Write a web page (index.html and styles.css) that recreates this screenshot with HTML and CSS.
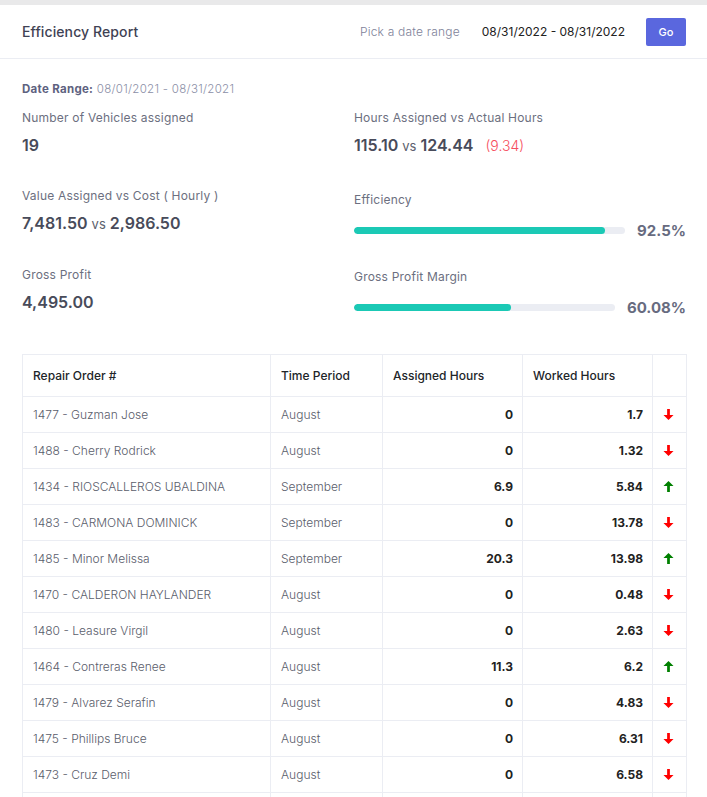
FILE: index.html
```html
<!DOCTYPE html>
<html>
<head>
<meta charset="utf-8">
<link rel="stylesheet" href="styles.css">
</head>
<body>
<div class="card">
  <div class="card-header">
    <div class="title">Efficiency Report</div>
    <div class="filters">
      <span class="pick">Pick a date range</span>
      <span class="range">08/31/2022 - 08/31/2022</span>
      <button class="go">Go</button>
    </div>
  </div>
  <div class="card-body">
    <div class="date-range"><b>Date Range:</b> 08/01/2021 - 08/31/2021</div>
    <div class="stats">
      <div class="col">
        <div class="stat">
          <div class="label">Number of Vehicles assigned</div>
          <div class="value">19</div>
        </div>
        <div class="stat">
          <div class="label">Value Assigned vs Cost ( Hourly )</div>
          <div class="value">7,481.50 <span class="vs">vs</span> 2,986.50</div>
        </div>
        <div class="stat">
          <div class="label">Gross Profit</div>
          <div class="value">4,495.00</div>
        </div>
      </div>
      <div class="col">
        <div class="stat">
          <div class="label">Hours Assigned vs Actual Hours</div>
          <div class="value">115.10 <span class="vs">vs</span> 124.44 <span class="diff">(9.34)</span></div>
        </div>
        <div class="stat progress-stat">
          <div class="label">Efficiency</div>
          <div class="progress-row">
            <div class="track"><div class="fill" style="width:92.5%"></div></div>
            <div class="pct">92.5%</div>
          </div>
        </div>
        <div class="stat progress-stat">
          <div class="label">Gross Profit Margin</div>
          <div class="progress-row">
            <div class="track"><div class="fill" style="width:60.08%"></div></div>
            <div class="pct">60.08%</div>
          </div>
        </div>
      </div>
    </div>
    <table class="report">
      <colgroup>
        <col class="c1"><col class="c2"><col class="c3"><col class="c4"><col class="c5">
      </colgroup>
      <thead>
        <tr><th>Repair Order #</th><th>Time Period</th><th>Assigned Hours</th><th>Worked Hours</th><th></th></tr>
      </thead>
      <tbody>
        <tr><td>1477 - Guzman Jose</td><td>August</td><td class="num">0</td><td class="num">1.7</td><td class="ic"><svg class="down" viewBox="0 0 12 12"><path d="M4.5 0h3v6.5h4L6 12 .5 6.5h4z"/></svg></td></tr>
        <tr><td>1488 - Cherry Rodrick</td><td>August</td><td class="num">0</td><td class="num">1.32</td><td class="ic"><svg class="down" viewBox="0 0 12 12"><path d="M4.5 0h3v6.5h4L6 12 .5 6.5h4z"/></svg></td></tr>
        <tr><td>1434 - RIOSCALLEROS UBALDINA</td><td>September</td><td class="num">6.9</td><td class="num">5.84</td><td class="ic"><svg class="up" viewBox="0 0 12 12"><path d="M4.5 12h3V5.5h4L6 0 .5 5.5h4z"/></svg></td></tr>
        <tr><td>1483 - CARMONA DOMINICK</td><td>September</td><td class="num">0</td><td class="num">13.78</td><td class="ic"><svg class="down" viewBox="0 0 12 12"><path d="M4.5 0h3v6.5h4L6 12 .5 6.5h4z"/></svg></td></tr>
        <tr><td>1485 - Minor Melissa</td><td>September</td><td class="num">20.3</td><td class="num">13.98</td><td class="ic"><svg class="up" viewBox="0 0 12 12"><path d="M4.5 12h3V5.5h4L6 0 .5 5.5h4z"/></svg></td></tr>
        <tr><td>1470 - CALDERON HAYLANDER</td><td>August</td><td class="num">0</td><td class="num">0.48</td><td class="ic"><svg class="down" viewBox="0 0 12 12"><path d="M4.5 0h3v6.5h4L6 12 .5 6.5h4z"/></svg></td></tr>
        <tr><td>1480 - Leasure Virgil</td><td>August</td><td class="num">0</td><td class="num">2.63</td><td class="ic"><svg class="down" viewBox="0 0 12 12"><path d="M4.5 0h3v6.5h4L6 12 .5 6.5h4z"/></svg></td></tr>
        <tr><td>1464 - Contreras Renee</td><td>August</td><td class="num">11.3</td><td class="num">6.2</td><td class="ic"><svg class="up" viewBox="0 0 12 12"><path d="M4.5 12h3V5.5h4L6 0 .5 5.5h4z"/></svg></td></tr>
        <tr><td>1479 - Alvarez Serafin</td><td>August</td><td class="num">0</td><td class="num">4.83</td><td class="ic"><svg class="down" viewBox="0 0 12 12"><path d="M4.5 0h3v6.5h4L6 12 .5 6.5h4z"/></svg></td></tr>
        <tr><td>1475 - Phillips Bruce</td><td>August</td><td class="num">0</td><td class="num">6.31</td><td class="ic"><svg class="down" viewBox="0 0 12 12"><path d="M4.5 0h3v6.5h4L6 12 .5 6.5h4z"/></svg></td></tr>
        <tr><td>1473 - Cruz Demi</td><td>August</td><td class="num">0</td><td class="num">6.58</td><td class="ic"><svg class="down" viewBox="0 0 12 12"><path d="M4.5 0h3v6.5h4L6 12 .5 6.5h4z"/></svg></td></tr>
        <tr class="empty"><td></td><td></td><td></td><td></td><td></td></tr>
      </tbody>
    </table>
  </div>
</div>
</body>
</html>
```

FILE: styles.css
```css
* { box-sizing: border-box; }
html, body { margin: 0; padding: 0; }
body {
  background: #e9e9ea;
  font-family: Inter, "Open Sans", sans-serif;
  color: #3f4254;
  padding-top: 5px;
  overflow: hidden;
  height: 797px;
}
.card {
  background: #fff;
  min-height: 792px;
}
.card-header {
  height: 54px;
  border-bottom: 1px solid #ebedf3;
  display: flex;
  align-items: center;
  justify-content: space-between;
  padding: 0 21px 0 22px;
}
.title {
  font-size: 14px;
  font-weight: 500;
  color: #3f4254;
  letter-spacing: 0.1px;
}
.filters {
  display: flex;
  align-items: center;
}
.pick {
  font-size: 12px;
  font-weight: 300;
  color: #7e8299;
  margin-right: 22px;
  letter-spacing: 0.2px;
}
.range {
  font-size: 12px;
  color: #222;
  margin-right: 21px;
}
.go {
  width: 40px;
  height: 28px;
  border: none;
  border-radius: 2px;
  background: #5a67de;
  color: #fff;
  font-family: inherit;
  font-size: 11px;
  font-weight: 500;
  padding: 0;
}
.card-body {
  padding: 23px 21px 0 22px;
}
.date-range {
  font-size: 11.5px;
  line-height: 14px;
  color: #8a8ea6;
  font-weight: 300;
  letter-spacing: 0.3px;
}
.date-range b {
  font-weight: 700;
  color: #5e6280;
}
.stats {
  display: grid;
  grid-template-columns: 1fr 1fr;
  margin-top: 13px;
}
.col {
  display: flex;
  flex-direction: column;
}
.stat {
  margin-bottom: 30px;
}
.label {
  font-size: 12px;
  line-height: 18px;
  color: #6c6f80;
  letter-spacing: 0.2px;
}
.value {
  margin-top: 6px;
  font-size: 16px;
  line-height: 24px;
  font-weight: 600;
  color: #484b5a;
}
.vs {
  font-size: 13px;
  font-weight: 400;
  color: #5c5f6e;
}
.diff {
  font-size: 14px;
  font-weight: 300;
  color: #f64e60;
  margin-left: 8px;
}
.progress-stat {
  padding-top: 3px;
  margin-bottom: 23px;
}
.progress-stat .label {
  margin-bottom: 9px;
}
.progress-row {
  display: flex;
  align-items: center;
  height: 24px;
}
.track {
  flex: 1;
  height: 7px;
  background: #ebedf3;
  border-radius: 4px;
  overflow: hidden;
}
.fill {
  height: 100%;
  background: #1bc9b5;
  border-radius: 4px;
}
.pct {
  margin-left: 12px;
  font-size: 15px;
  font-weight: 700;
  color: #676b80;
}
.report {
  width: 100%;
  margin-top: 10px;
  border-collapse: collapse;
  table-layout: fixed;
}
.c1 { width: 248px; }
.c2 { width: 112px; }
.c3 { width: 140px; }
.c4 { width: 130px; }
.c5 { width: 34px; }
.report th, .report td {
  border: 1px solid #ebedf3;
  font-size: 12px;
  text-align: left;
  padding: 0 9px 0 10px;
  white-space: nowrap;
  overflow: hidden;
}
.report th {
  height: 42px;
  font-weight: 500;
  color: #212529;
}
.report td {
  height: 36px;
  font-weight: 300;
  color: #5a5d6b;
}
.report td.num {
  text-align: right;
  font-weight: 700;
  color: #222;
}
.report td.ic svg {
  display: block;
  width: 11px;
  height: 11px;
}
.down { fill: #ff0000; }
.up { fill: #008000; }
```
